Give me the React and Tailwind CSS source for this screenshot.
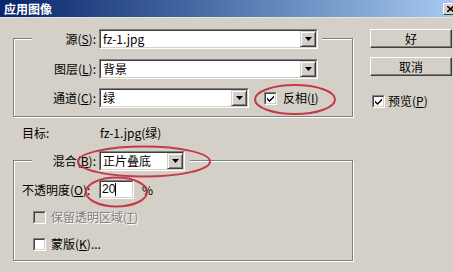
import React from 'react';

const font = { fontFamily: '"Noto Sans CJK SC", "Noto Sans", sans-serif' };

const Combo = ({ value, width }) => (
    <div className={`${width} h-[20px] border border-t-[#808080] border-l-[#808080] border-b-white border-r-white`}>
        <div className="h-full flex items-center bg-white border border-t-[#404040] border-l-[#404040] border-b-[#d4d0c8] border-r-[#d4d0c8]">
            <span className="flex-1 pl-[2px] text-[12px] leading-[16px] whitespace-nowrap">{value}</span>
            <div className="w-[16px] h-[16px] flex items-center justify-center bg-[#d4d0c8] border border-t-[#d4d0c8] border-l-[#d4d0c8] border-b-[#404040] border-r-[#404040] shadow-[inset_1px_1px_0_#fff,inset_-1px_-1px_0_#808080]">
                <svg width="7" height="4" viewBox="0 0 7 4"><path d="M0 0h7L3.5 4z" fill="#000" /></svg>
            </div>
        </div>
    </div>
);

const Check = ({ checked, disabled }) => (
    <div className="w-[13px] h-[13px] shrink-0 border border-t-[#808080] border-l-[#808080] border-b-white border-r-white">
        <div className={`w-full h-full border border-t-[#404040] border-l-[#404040] border-b-[#d4d0c8] border-r-[#d4d0c8] flex items-center justify-center ${disabled ? 'bg-[#d4d0c8]' : 'bg-white'}`}>
            {checked && (
                <svg width="7" height="7" viewBox="0 0 7 7"><path d="M0 2.5l2.5 2.5L7 0.5v2L2.5 7 0 4.5z" fill="#000" /></svg>
            )}
        </div>
    </div>
);

const Button = ({ children }) => (
    <div className="w-[82px] h-[19px] bg-[#d4d0c8] border border-t-white border-l-white border-b-[#404040] border-r-[#404040] shadow-[inset_-1px_-1px_0_#808080] flex items-center justify-center text-[12px] leading-[16px]">
        {children}
    </div>
);

const Group = ({ height, children }) => (
    <div className={`${height} border border-[#808080] shadow-[inset_1px_1px_0_#fff,1px_1px_0_#fff]`}>
        {children}
    </div>
);

const App = () => {
    return (
        <div className="relative w-[453px] h-[272px] overflow-hidden bg-[#d4d0c8] text-black" style={font}>
            {/* title bar */}
            <div className="h-[18px] flex items-center justify-between bg-gradient-to-r from-[#0a246a] to-[#a6caf0] border-b border-[#e6e4de]">
                <span className="pl-[4px] text-[12px] font-bold text-white leading-[16px]">应用图像</span>
                <div className="w-[14px] h-[12px] mr-[-4px] bg-[#d4d0c8] border border-t-white border-l-white border-b-[#404040] border-r-[#404040] flex items-center justify-center">
                    <svg width="7" height="6" viewBox="0 0 7 6"><path d="M0 0l7 6M7 0L0 6" stroke="#000" strokeWidth="1.6" /></svg>
                </div>
            </div>

            <div className="flex pl-[13px]">
                {/* left column */}
                <div className="w-[340px]">
                    <div className="mt-[20px]">
                        <Group height="h-[79px]">
                            <div className="relative -mt-[10px] ml-[18px] w-[290px] bg-[#d4d0c8] flex items-center">
                                <span className="w-[64px] text-right text-[12px] leading-[16px]">源(<u>S</u>):</span>
                                <div className="ml-[3px]"><Combo value="fz-1.jpg" width="w-[219px]" /></div>
                            </div>
                            <div className="mt-[10px] ml-[18px] flex items-center">
                                <span className="w-[64px] text-right text-[12px] leading-[16px]">图层(<u>L</u>):</span>
                                <div className="ml-[3px]"><Combo value="背景" width="w-[219px]" /></div>
                            </div>
                            <div className="mt-[9px] ml-[18px] flex items-center">
                                <span className="w-[64px] text-right text-[12px] leading-[16px]">通道(<u>C</u>):</span>
                                <div className="ml-[3px]"><Combo value="绿" width="w-[150px]" /></div>
                                <div className="ml-[15px] flex items-center gap-[6px]">
                                    <Check checked />
                                    <span className="text-[12px] leading-[16px]">反相(<u>I</u>)</span>
                                </div>
                            </div>
                        </Group>
                    </div>

                    <div className="mt-[8px] ml-[9px] h-[16px] flex items-center text-[12px] leading-[16px]">
                        <span className="w-[78px]">目标:</span>
                        <span>fz-1.jpg(绿)</span>
                    </div>

                    <div className="mt-[19px]">
                        <Group height="h-[101px]">
                            <div className="relative -mt-[10px] ml-[18px] w-[158px] bg-[#d4d0c8] flex items-center">
                                <span className="w-[64px] text-right text-[12px] leading-[16px]">混合(<u>B</u>):</span>
                                <div className="ml-[3px]"><Combo value="正片叠底" width="w-[86px]" /></div>
                            </div>
                            <div className="mt-[9px] ml-[8px] flex items-center">
                                <span className="w-[77px] text-[12px] leading-[16px]">不透明度(<u>O</u>):</span>
                                <div className="w-[35px] h-[19px] border border-t-[#808080] border-l-[#808080] border-b-white border-r-white">
                                    <div className="h-full bg-white border border-t-[#404040] border-l-[#404040] border-b-[#d4d0c8] border-r-[#d4d0c8] flex items-center pl-[1px]">
                                        <span className="text-[12px] leading-[15px]" style={{ fontFamily: '"Liberation Sans", sans-serif' }}>20</span>
                                        <span className="w-[1px] h-[13px] bg-black" />
                                    </div>
                                </div>
                                <span className="ml-[8px] text-[12px] leading-[16px]">%</span>
                            </div>
                            <div className="mt-[10px] ml-[19px] flex items-center gap-[5px]">
                                <Check disabled />
                                <span className="text-[12px] leading-[16px] text-[#808080] [text-shadow:1px_1px_0_#fff]">保留透明区域(<u>T</u>)</span>
                            </div>
                            <div className="mt-[11px] ml-[19px] flex items-center gap-[5px]">
                                <Check />
                                <span className="text-[12px] leading-[16px]">蒙版(<u>K</u>)...</span>
                            </div>
                        </Group>
                    </div>
                </div>

                {/* right column */}
                <div className="ml-[17px] flex flex-col">
                    <div className="mt-[11px]"><Button>好</Button></div>
                    <div className="mt-[9px]"><Button>取消</Button></div>
                    <div className="mt-[17px] ml-[2px] flex items-center gap-[3px]">
                        <Check checked />
                        <span className="text-[12px] leading-[16px]">预览(<u>P</u>)</span>
                    </div>
                </div>
            </div>

            {/* red annotation ellipses */}
            <svg className="absolute inset-0 pointer-events-none" width="453" height="272">
                <g fill="none" stroke="#c22a3c" strokeWidth="2" opacity="0.9">
                    <ellipse cx="295" cy="99.5" rx="40" ry="14.5" />
                    <ellipse cx="144" cy="161.5" rx="66" ry="15" />
                    <ellipse cx="116.5" cy="192" rx="30.5" ry="14.5" />
                </g>
            </svg>
        </div>
    );
};

export default App;
